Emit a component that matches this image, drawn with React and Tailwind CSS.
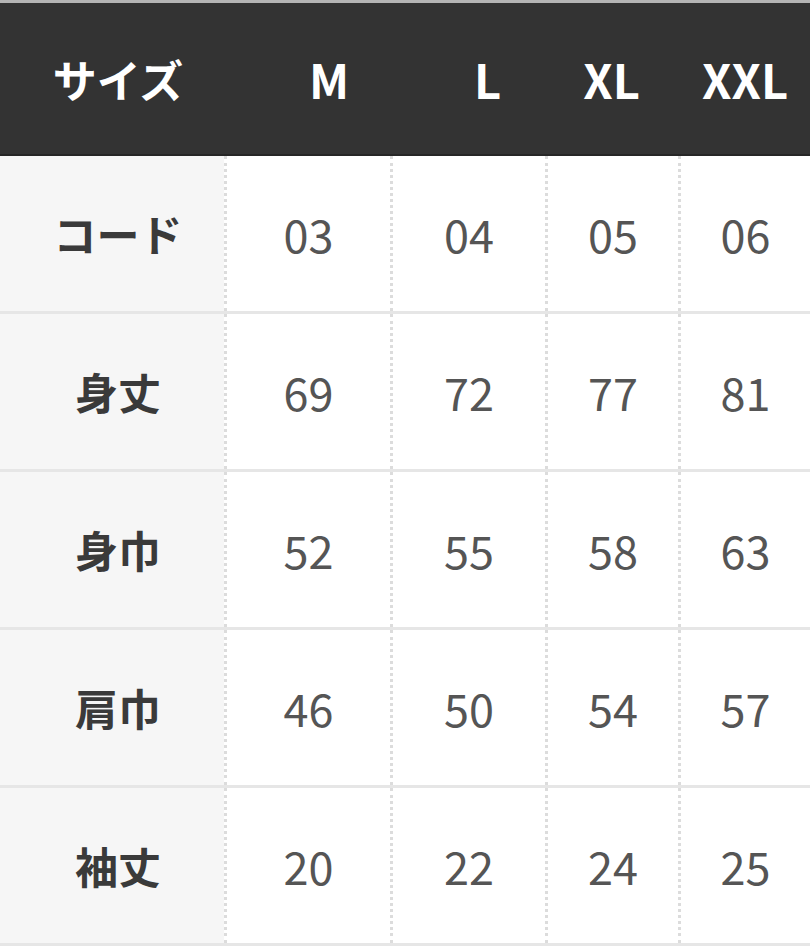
import React from "react";

const rows = [
  ["コード", "03", "04", "05", "06"],
  ["身丈", "69", "72", "77", "81"],
  ["身巾", "52", "55", "58", "63"],
  ["肩巾", "46", "50", "54", "57"],
  ["袖丈", "20", "22", "24", "25"],
];

const font = { fontFamily: '"Noto Sans CJK JP", "Noto Sans", sans-serif' };

export default function App() {
  return (
    <div className="w-[810px] h-[947px] bg-white overflow-hidden" style={font}>
      <div className="border-t-[3px] border-[#b5b5b5]">
        <div className="grid grid-cols-[224px_166px_155px_133px_1fr] h-[153px] bg-[#333333] border-b-[2px] border-[#262626] text-white font-bold items-center leading-none">
          <div className="text-center pl-[12px] text-[44px]">サイズ</div>
          <div className="text-center pl-[44px] text-[47px]">M</div>
          <div className="text-center pl-[40px] text-[47px]">L</div>
          <div className="text-center text-[47px]">XL</div>
          <div className="text-center text-[47px] pl-[2px]">XXL</div>
        </div>
      </div>
      {rows.map((r, i) => (
        <div
          key={i}
          className="grid grid-cols-[224px_166px_155px_133px_1fr] h-[158px] border-b-[3px] border-[#e6e6e6]"
        >
          <div className="bg-[#f6f6f6] flex items-center justify-center pl-[12px] text-[43px] font-bold text-[#3a3a3a]">
            {r[0]}
          </div>
          {r.slice(1).map((v, j) => (
            <div
              key={j}
              className="flex items-center justify-center border-l-[3px] border-dotted border-[#dcdcdc] text-[45px] text-[#555555]"
            >
              {v}
            </div>
          ))}
        </div>
      ))}
    </div>
  );
}
